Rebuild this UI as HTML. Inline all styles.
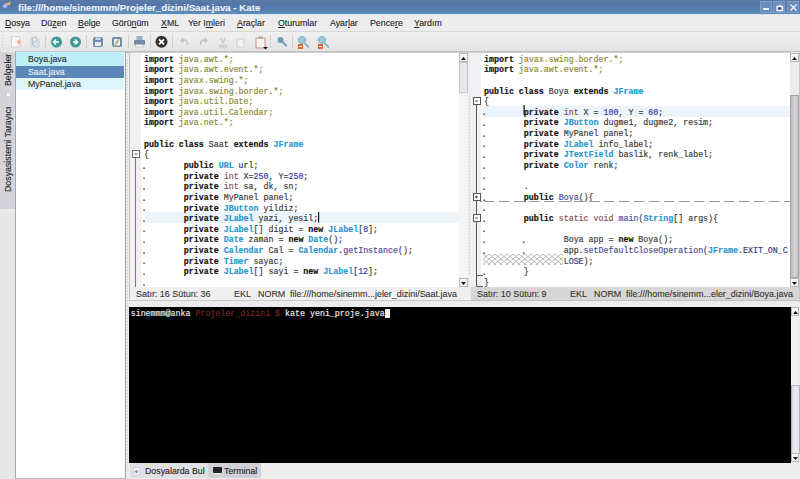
<!DOCTYPE html>
<html><head><meta charset="utf-8">
<style>
*{margin:0;padding:0;box-sizing:border-box}
html,body{width:800px;height:479px;overflow:hidden;background:#ececec;font-family:"Liberation Sans",sans-serif;position:relative;-webkit-text-stroke:0.1px currentColor}
.a{position:absolute}
#title{left:0;top:0;width:800px;height:14px;background:linear-gradient(#5b7ca6,#5474a8 35%,#5886b2 80%,#6590bc)}
#title .t{left:18px;top:1.7px;font-weight:bold;font-size:9.7px;color:#eef3fa;white-space:pre;line-height:12px}
.wb{top:1px;width:12px;height:12px;background:#6a8cbc;border:1px solid #7e9ccb}
#menu{left:0;top:14px;width:800px;height:18px;background:#ededed;border-top:1px solid #d6e6f0;border-bottom:1px solid #d8d8d8}
.m{top:2.5px;font-size:8.8px;color:#222;white-space:pre;line-height:11px}
#tool{left:0;top:32px;width:800px;height:20px;background:linear-gradient(#f0f0f0,#e4e4e4);border-bottom:1px solid #c0c0c0;box-shadow:0 1px 0 #a8a8a8}
.sep{top:4px;width:1px;height:13px;background:#cfcfcf}
#side{left:0;top:51px;width:16px;height:428px;background:#e8e8e8;border-right:1px solid #a8a8a8}
.tab{left:0px;width:15px;background:#d4d4da}
.vt{font-size:8.8px;color:#222;white-space:pre;transform-origin:0 0;transform:rotate(-90deg);line-height:11px}
#docs{left:16px;top:51px;width:110px;height:428px;background:#fff;border-right:1px solid #a0a0a0;border-top:1px solid #c8c8c8;border-bottom:1px solid #b8b8b8}
.di{left:0;width:108px;height:13px;font-size:8.8px;line-height:13px;padding-left:12px;color:#2a2a2a;white-space:pre}
.vsplit{background:#e6e6e6}
.ed{background:#fff;overflow:hidden}
.gut{background:#f2eff3}
pre{-webkit-text-stroke:0.18px currentColor;font-family:"Liberation Mono",monospace;font-size:8.31px;line-height:10.64px;color:#3a3a3a;white-space:pre}
.k{font-weight:bold;color:#111}
.p{color:#8c8a30}
.c{color:#2a98d0;font-weight:bold}
.d{color:#885050}
.n{color:#3a3aa8}
.o{color:#4a4a5a}
.f{color:#4d4d9c}
.e{color:#3c3c78}
.t{position:relative;left:-2.6px;top:0.6px;font-weight:bold}
.sb{background:#f2f2f2}
.btn{width:9px;height:9px;background:#f4f4f4;border:1px solid #b8b8b8}
.status{height:14px;font-size:8.95px;line-height:14px;color:#333;white-space:pre}
.status span{top:0}
.btab span{top:1px}
#term{left:129px;top:307px;width:662px;height:156px;background:#000}
#term pre{color:#e8e8e8}
.btab{top:463px;height:15px;font-size:8.8px;line-height:15px;color:#222;white-space:pre}
</style></head><body>

<div id="title" class="a">
  <div class="a" style="left:2px;top:2px;width:10px;height:10px">
    <svg width="12" height="12" viewBox="0 0 12 12" style="position:absolute;left:-2px;top:-2px"><path d="M2 6 L6.5 2 L11 6.5 L7 11Z" fill="#5a74c8"/><path d="M2 6 L6 2.5 L8 6 L5 8.5Z" fill="#b4b0ee"/><path d="M6 3.5 L11 1.5 L9.5 6Z" fill="#d4c454"/></svg>
  </div>
  <div class="a t">file:///home/sinemmm/Projeler_dizini/Saat.java - Kate</div>
  <div class="a wb" style="left:760px;width:12px"><div class="a" style="left:2px;top:6px;width:6px;height:1.5px;background:#eef2fa"></div></div>
  <div class="a wb" style="left:773px;width:12px"><svg class="a" style="left:1px;top:1px" width="9" height="9"><path d="M2 3.5h5.5v4h-5.5z" fill="none" stroke="#eef2fa" stroke-width="1.4"/><path d="M3.5 2.2h3" stroke="#eef2fa" stroke-width="1"/><rect x="3.5" y="4.5" width="2" height="2" fill="#334"/></svg></div>
  <div class="a wb" style="left:787px;width:12px"><svg class="a" style="left:1px;top:1px" width="9" height="9"><path d="M1.5 1.5L7.5 7.5M7.5 1.5L1.5 7.5" stroke="#f0f4fa" stroke-width="1.3"/></svg></div>
</div>

<div id="menu" class="a">
  <div class="a m" style="left:5px"><u>D</u>osya</div>
  <div class="a m" style="left:41px">Dü<u>z</u>en</div>
  <div class="a m" style="left:78px"><u>B</u>elge</div>
  <div class="a m" style="left:112px">Görü<u>n</u>üm</div>
  <div class="a m" style="left:161px"><u>X</u>ML</div>
  <div class="a m" style="left:188px">Yer I<u>m</u>leri</div>
  <div class="a m" style="left:237px"><u>A</u>raçlar</div>
  <div class="a m" style="left:278px"><u>O</u>turumlar</div>
  <div class="a m" style="left:330px">Ayar<u>l</u>ar</div>
  <div class="a m" style="left:370px">Pence<u>r</u>e</div>
  <div class="a m" style="left:414px"><u>Y</u>ardım</div>
</div>

<div id="tool" class="a">
  <svg class="a" style="left:0;top:-1px" width="800" height="20" viewBox="0 31 800 20">
    <!-- handle -->
    <g fill="#c4c4c4"><rect x="2" y="35" width="1" height="1"/><rect x="2" y="38" width="1" height="1"/><rect x="2" y="41" width="1" height="1"/><rect x="2" y="44" width="1" height="1"/><rect x="2" y="47" width="1" height="1"/></g>
    <!-- separators -->
    <g fill="#d0d0d0"><rect x="45" y="35" width="1" height="13"/><rect x="86" y="35" width="1" height="13"/><rect x="128" y="35" width="1" height="13"/><rect x="150" y="35" width="1" height="13"/><rect x="172" y="35" width="1" height="13"/><rect x="270" y="35" width="1" height="13"/><rect x="292" y="35" width="1" height="13"/></g>
    <!-- new -->
    <rect x="11.5" y="36.5" width="8" height="10.5" fill="#f8f8f8" stroke="#cfcfd4"/><circle cx="19" cy="42" r="2" fill="#f2b07c"/>
    <!-- faded open -->
    <path d="M31 37.5h6l2 2v7.5h-8z" fill="#dde4ea" stroke="#c2ccd6" stroke-width="0.8"/><circle cx="34.5" cy="39.5" r="2.2" fill="#f4f8fb" stroke="#9ab4c4" stroke-width="0.9"/><path d="M32 42l2 4" stroke="#a8bccc" stroke-width="1.2"/>
    <!-- back/fwd -->
    <circle cx="56.5" cy="42" r="5.5" fill="#3e9a9a"/><path d="M59 42h-5M56 39.5l-2.5 2.5 2.5 2.5" stroke="#fff" stroke-width="1.6" fill="none"/>
    <circle cx="75.5" cy="42" r="5.5" fill="#3e9a9a"/><path d="M73 42h5M75 39.5l2.5 2.5-2.5 2.5" stroke="#fff" stroke-width="1.6" fill="none"/>
    <!-- save -->
    <rect x="93" y="37" width="10" height="10" rx="2" fill="#6f8cac"/><rect x="95" y="42" width="6" height="4" fill="#e4eaf0"/><rect x="95.5" y="37.5" width="5" height="2.5" fill="#c8d4e2"/>
    <!-- save as -->
    <rect x="112" y="37" width="10" height="10" rx="2" fill="#6f8cac"/><rect x="114" y="39" width="6" height="6.5" fill="#eef0f8"/><path d="M115 45l4-6" stroke="#e8b830" stroke-width="1.8"/><circle cx="117" cy="42.5" r="1.2" fill="#90b0e0"/>
    <!-- print -->
    <rect x="136.5" y="36" width="6" height="4.5" fill="#9eb2c4"/><rect x="134" y="40" width="11" height="5" rx="1" fill="#6f8ca4"/><rect x="135.5" y="44.5" width="8" height="2.5" fill="#f4f4f4" stroke="#b0b0b0" stroke-width="0.5"/>
    <!-- close -->
    <circle cx="161.5" cy="41.8" r="6" fill="#333"/><path d="M159 39.3l5 5M164 39.3l-5 5" stroke="#fff" stroke-width="1.7"/>
    <!-- undo redo cut copy (disabled) -->
    <path d="M183 38l-2 3 3 1M181.5 41c3-2 6-1 6 4" stroke="#c4c4c4" stroke-width="1.6" fill="none"/>
    <path d="M205 38l2 3-3 1M206.5 41c-3-2-6-1-6 4" stroke="#c4c4c4" stroke-width="1.6" fill="none"/>
    <path d="M220 38l3 5 2-5M221 45a1.5 1.5 0 1 0 0.1 0M225 45a1.5 1.5 0 1 0 0.1 0" stroke="#c8c8c8" stroke-width="1.3" fill="none"/>
    <rect x="237" y="39" width="7" height="8" fill="#f2f2f2" stroke="#d0d0d0"/>
    <!-- paste -->
    <rect x="256" y="38" width="9" height="10" fill="#f4f4f8" stroke="#d89070"/><rect x="258" y="36.5" width="5" height="2.5" fill="#a8b0b8"/><path d="M263 47h5l-2.5 2.5z" fill="#111"/>
    <!-- find -->
    <circle cx="280.5" cy="40" r="3" fill="#6aa0b8"/><path d="M282.5 42l4 4" stroke="#6aa0b0" stroke-width="2"/>
    <!-- find replace -->
    <circle cx="302" cy="40" r="3.6" fill="#9cc8d8" stroke="#7aa8c0" stroke-width="0.8"/><path d="M304.5 43l4.5 4.5" stroke="#8ab8c0" stroke-width="2"/><rect x="298" y="44" width="5" height="5" fill="#e06030"/><rect x="299" y="46" width="3" height="1" fill="#fff"/>
    <circle cx="322" cy="40" r="3.6" fill="#9cc8d8" stroke="#7aa8c0" stroke-width="0.8"/><path d="M324.5 43l4.5 4.5" stroke="#8ab8c0" stroke-width="2"/><rect x="318" y="44" width="5" height="5" fill="#e06030"/><rect x="319" y="46" width="3" height="1" fill="#fff"/>
  </svg>
</div>

<div id="side" class="a">
  <div class="a tab" style="top:1px;height:157px"></div>
  <div class="a vt" style="left:3px;top:35px">Belgeler</div>
  <svg class="a" style="left:5px;top:40px" width="7" height="7"><path d="M1 1h3l2 2v3h-5z" fill="#f4f4f8" stroke="#b8c0cc" stroke-width="0.8"/></svg>
  <div class="a vt" style="left:3px;top:141px">Dosyasistemi Tarayıcı</div>
  <svg class="a" style="left:5px;top:145px" width="7" height="7"><path d="M1 3h5v3h-5z" fill="#c8d4e0"/><path d="M3 1v3" stroke="#d0d8e0"/></svg>
</div>

<div id="docs" class="a">
  <div class="a di" style="top:0;height:13.5px;line-height:14px;background:#bdeefa">Boya.java</div>
  <div class="a di" style="top:13.5px;height:12px;line-height:12.5px;background:#5a86b8;color:#eef2f8">Saat.java</div>
  <div class="a di" style="top:25.5px;height:12px;line-height:13px;background:#e0f5fb">MyPanel.java</div>
</div>

<div id="ed1" class="a ed" style="left:130px;top:52px;width:338px;height:235px">
  <div class="a gut" style="left:0;top:0;width:11px;height:235px"></div>
  <div class="a" style="left:15px;top:160px;width:314px;height:10.5px;background:#ebf3fb"></div>
  <pre class="a" style="left:14px;top:2.6px"><span class="k">import</span> <span class="p">java.awt.*;</span>
<span class="k">import</span> <span class="p">java.awt.event.*;</span>
<span class="k">import</span> <span class="p">javax.swing.*;</span>
<span class="k">import</span> <span class="p">javax.swing.border.*;</span>
<span class="k">import</span> <span class="p">java.util.Date;</span>
<span class="k">import</span> <span class="p">java.util.Calendar;</span>
<span class="k">import</span> <span class="p">java.net.*;</span>

<span class="k">public</span> <span class="k">class</span> Saat <span class="k">extends</span> <span class="c">JFrame</span>
{
<b class="t">.</b>       <span class="k">public</span> <span class="c">URL</span> url;
<b class="t">.</b>       <span class="k">private</span> <span class="d">int</span> X=<span class="n">250</span>, Y=<span class="n">250</span>;
<b class="t">.</b>       <span class="k">private</span> <span class="d">int</span> sa, dk, sn;
<b class="t">.</b>       <span class="k">private</span> MyPanel panel;
<b class="t">.</b>       <span class="k">private</span> <span class="c">JButton</span> yildiz;
<b class="t">.</b>       <span class="k">private</span> <span class="c">JLabel</span> yazi, yesil;
<b class="t">.</b>       <span class="k">private</span> <span class="c">JLabel</span>[] digit = <span class="k">new</span> <span class="c">JLabel</span>[<span class="n">8</span>];
<b class="t">.</b>       <span class="k">private</span> <span class="c">Date</span> zaman = <span class="k">new</span> <span class="c">Date</span>();
<b class="t">.</b>       <span class="k">private</span> <span class="c">Calendar</span> Cal = <span class="c">Calendar</span>.<span class="f">getInstance</span>();
<b class="t">.</b>       <span class="k">private</span> <span class="c">Timer</span> sayac;
<b class="t">.</b>       <span class="k">private</span> <span class="c">JLabel</span>[] sayi = <span class="k">new</span> <span class="c">JLabel</span>[<span class="n">12</span>];
<b class="t">.</b></pre>
</div>
<div id="ed2" class="a ed" style="left:470px;top:52px;width:329px;height:235px">
  <div class="a gut" style="left:0;top:0;width:11px;height:235px"></div>
  <div class="a" style="left:13px;top:54px;width:307px;height:10.5px;background:#ebf3fb"></div>
  <pre class="a" style="left:14px;top:2.6px"><span class="k">import</span> <span class="p">javax.swing.border.*;</span>
<span class="k">import</span> <span class="p">java.awt.event.*;</span>

<span class="k">public</span> <span class="k">class</span> Boya <span class="k">extends</span> <span class="c">JFrame</span>
{
<b class="t">.</b>       <span class="k">private</span> <span class="d">int</span> X = <span class="n">100</span>, Y = <span class="n">60</span>;
<b class="t">.</b>       <span class="k">private</span> <span class="c">JButton</span> dugme1, dugme2, resim;
<b class="t">.</b>       <span class="k">private</span> MyPanel panel;
<b class="t">.</b>       <span class="k">private</span> <span class="c">JLabel</span> info_label;
<b class="t">.</b>       <span class="k">private</span> <span class="c">JTextField</span> baslik, renk_label;
<b class="t">.</b>       <span class="k">private</span> <span class="c">Color</span> renk;
<b class="t">.</b>
<b class="t">.</b>       .
<b class="t">.</b>       <span class="k">public</span> <span class="f">Boya</span>(){
<b class="t">.</b>
<b class="t">.</b>       <span class="k">public</span> <span class="d">static</span> <span class="d">void</span> <span class="f">main</span>(<span class="c">String</span>[] args){
<b class="t">.</b>
<b class="t">.</b>       <b class="t">.</b>       Boya app = <span class="k">new</span> Boya();
<b class="t">.</b>       <b class="t">.</b>       app.<span class="f">setDefaultCloseOperation</span>(<span class="c">JFrame</span>.<span class="e">EXIT_ON_C</span>
                <span class="e">LOSE</span>);
<b class="t">.</b>       }
}</pre>
</div>

<!-- editor1 scrollbar -->
<div class="a" style="left:459px;top:52px;width:9px;height:235px;background:#f5f5f5"></div>
<div class="a btn" style="left:459px;top:53px"><svg class="a" style="left:0;top:1px" width="7" height="6"><path d="M1 5h5l-2.5-3z" fill="#111"/></svg></div>
<div class="a" style="left:459px;top:62px;width:9px;height:31px;background:#e6e6ee;border:1px solid #c4c4cc"></div>
<div class="a btn" style="left:459px;top:278px"><svg class="a" style="left:0;top:1px" width="7" height="6"><path d="M1 2h5l-2.5 3z" fill="#111"/></svg></div>
<!-- splitter between editors -->
<div class="a" style="left:468px;top:52px;width:2px;height:235px;background:#ececec"></div>
<div class="a" style="left:468.5px;top:96px;width:1px;height:180px;background:repeating-linear-gradient(#c4c4c4 0 1px,transparent 1px 3px)"></div>
<div class="a" style="left:127px;top:60px;width:1px;height:410px;background:repeating-linear-gradient(#cacaca 0 1px,transparent 1px 3px)"></div>
<div class="a" style="left:129px;top:52px;width:1px;height:249px;background:#c4c4c8"></div>
<div class="a" style="left:129px;top:52px;width:670px;height:1px;background:#d0d0d0"></div>
<!-- editor2 scrollbar -->
<div class="a" style="left:790px;top:52px;width:9px;height:235px;background:#ececec"></div>
<div class="a btn" style="left:790px;top:53px"><svg class="a" style="left:0;top:1px" width="7" height="6"><path d="M1 5h5l-2.5-3z" fill="#111"/></svg></div>
<div class="a" style="left:790px;top:95px;width:9px;height:183px;background:linear-gradient(90deg,#b8b8bc,#d6d6da 50%,#c4c4c8);border:1px solid #a8a8ac"></div>
<div class="a btn" style="left:790px;top:278px"><svg class="a" style="left:0;top:1px" width="7" height="6"><path d="M1 2h5l-2.5 3z" fill="#111"/></svg></div>
<div class="a" style="left:799px;top:52px;width:1px;height:250px;background:#c8c8c8"></div>
<!-- fold markers -->
<svg class="a" style="left:0;top:0" width="800" height="300">
  <g stroke="#555" stroke-width="1" fill="#fff">
    <path d="M135.5 157.5V287" fill="none" stroke="#7c7484"/>
    <rect x="132.5" y="150.5" width="7" height="7" stroke="#6a6a70"/>
    <path d="M134.5 154h3" />
    <path d="M476.5 104.5V286.5H483" fill="none"/>
    <path d="M476.5 275.5H483" fill="none"/>
    <rect x="473.5" y="97.5" width="7" height="7"/>
    <path d="M475 101h3"/>
    <rect x="473.5" y="193.5" width="7" height="7"/>
    <path d="M475 197h3M476.5 195.5v3"/>
    <rect x="473.5" y="214.5" width="7" height="7"/>
    <path d="M475 218h3"/>
  </g>
  <path d="M484 201.5H790" stroke="#999" stroke-width="1" stroke-dasharray="10.5 4.5"/><path d="M480 201.5H482" stroke="#999" stroke-width="1"/>
  <rect x="318" y="212" width="1.2" height="10.5" fill="#111"/>
  <rect x="523.5" y="105" width="1.2" height="10" fill="#111"/>
</svg>
<svg class="a" style="left:483px;top:254px" width="80" height="11"><defs><pattern id="xh" width="6" height="5" patternUnits="userSpaceOnUse"><path d="M0 0L6 5M6 0L0 5" stroke="#b0b0b0" stroke-width="0.9"/></pattern></defs><rect width="80" height="11" fill="url(#xh)"/></svg>
<div class="a status" style="left:130px;top:287px;width:340px;background:#efefef;border-bottom:1px solid #c8c8c8">
  <span class="a" style="left:6px">Satır: 16 Sütun: 36</span><span class="a" style="left:104px">EKL</span><span class="a" style="left:128px">NORM</span><span class="a" style="left:160px">file:///home/sinemm...jeler_dizini/Saat.java</span>
</div>
<div class="a status" style="left:471px;top:287px;width:328px;background:#d6d6d6;border-bottom:1px solid #c0c0c0">
  <span class="a" style="left:6px">Satır: 10 Sütun: 9</span><span class="a" style="left:99px">EKL</span><span class="a" style="left:123px">NORM</span><span class="a" style="left:155px">file:///home/sinemm...eler_dizini/Boya.java</span>
</div>

<div id="term" class="a">
  <pre class="a" style="left:1.7px;top:2px">sinemmm@anka <span style="color:#782020">Projeler_dizini $</span> kate yeni_proje.java<span style="background:#f0f0f0"> </span></pre>
</div>
<div class="a sb" style="left:791px;top:307px;width:8px;height:156px"></div>
<div class="a" style="left:791px;top:385px;width:9px;height:69px;background:linear-gradient(90deg,#d8d8e0,#ececf2 50%,#e0e0e8);border:1px solid #b4b4bc"></div>
<div class="a btn" style="left:791px;top:307px;width:8px;height:9px"><svg class="a" style="left:0;top:1px" width="7" height="6"><path d="M1 5h5l-2.5-3z" fill="#111"/></svg></div>
<div class="a btn" style="left:791px;top:453px;width:8px;height:9px"><svg class="a" style="left:0;top:1px" width="7" height="6"><path d="M1 2h5l-2.5 3z" fill="#111"/></svg></div>

<div class="a btab" style="left:130px;width:78px;background:#e0e0e4">
  <svg class="a" style="left:3px;top:4px" width="8" height="9"><rect x="0.5" y="0.5" width="6" height="7.5" rx="1" fill="#f4f6fa" stroke="#c8d0dc"/><circle cx="3.5" cy="4.5" r="1.6" fill="#8898a8"/></svg>
  <span class="a" style="left:15px">Dosyalarda Bul</span>
</div>
<div class="a btab" style="left:208px;width:53px;background:#d0d0d6">
  <svg class="a" style="left:5px;top:4px" width="9" height="8"><rect x="0" y="0" width="9" height="6" rx="1" fill="#222"/><rect x="1" y="6" width="7" height="1.5" fill="#e8e8e8"/></svg>
  <span class="a" style="left:16px">Terminal</span>
</div>

</body></html>
